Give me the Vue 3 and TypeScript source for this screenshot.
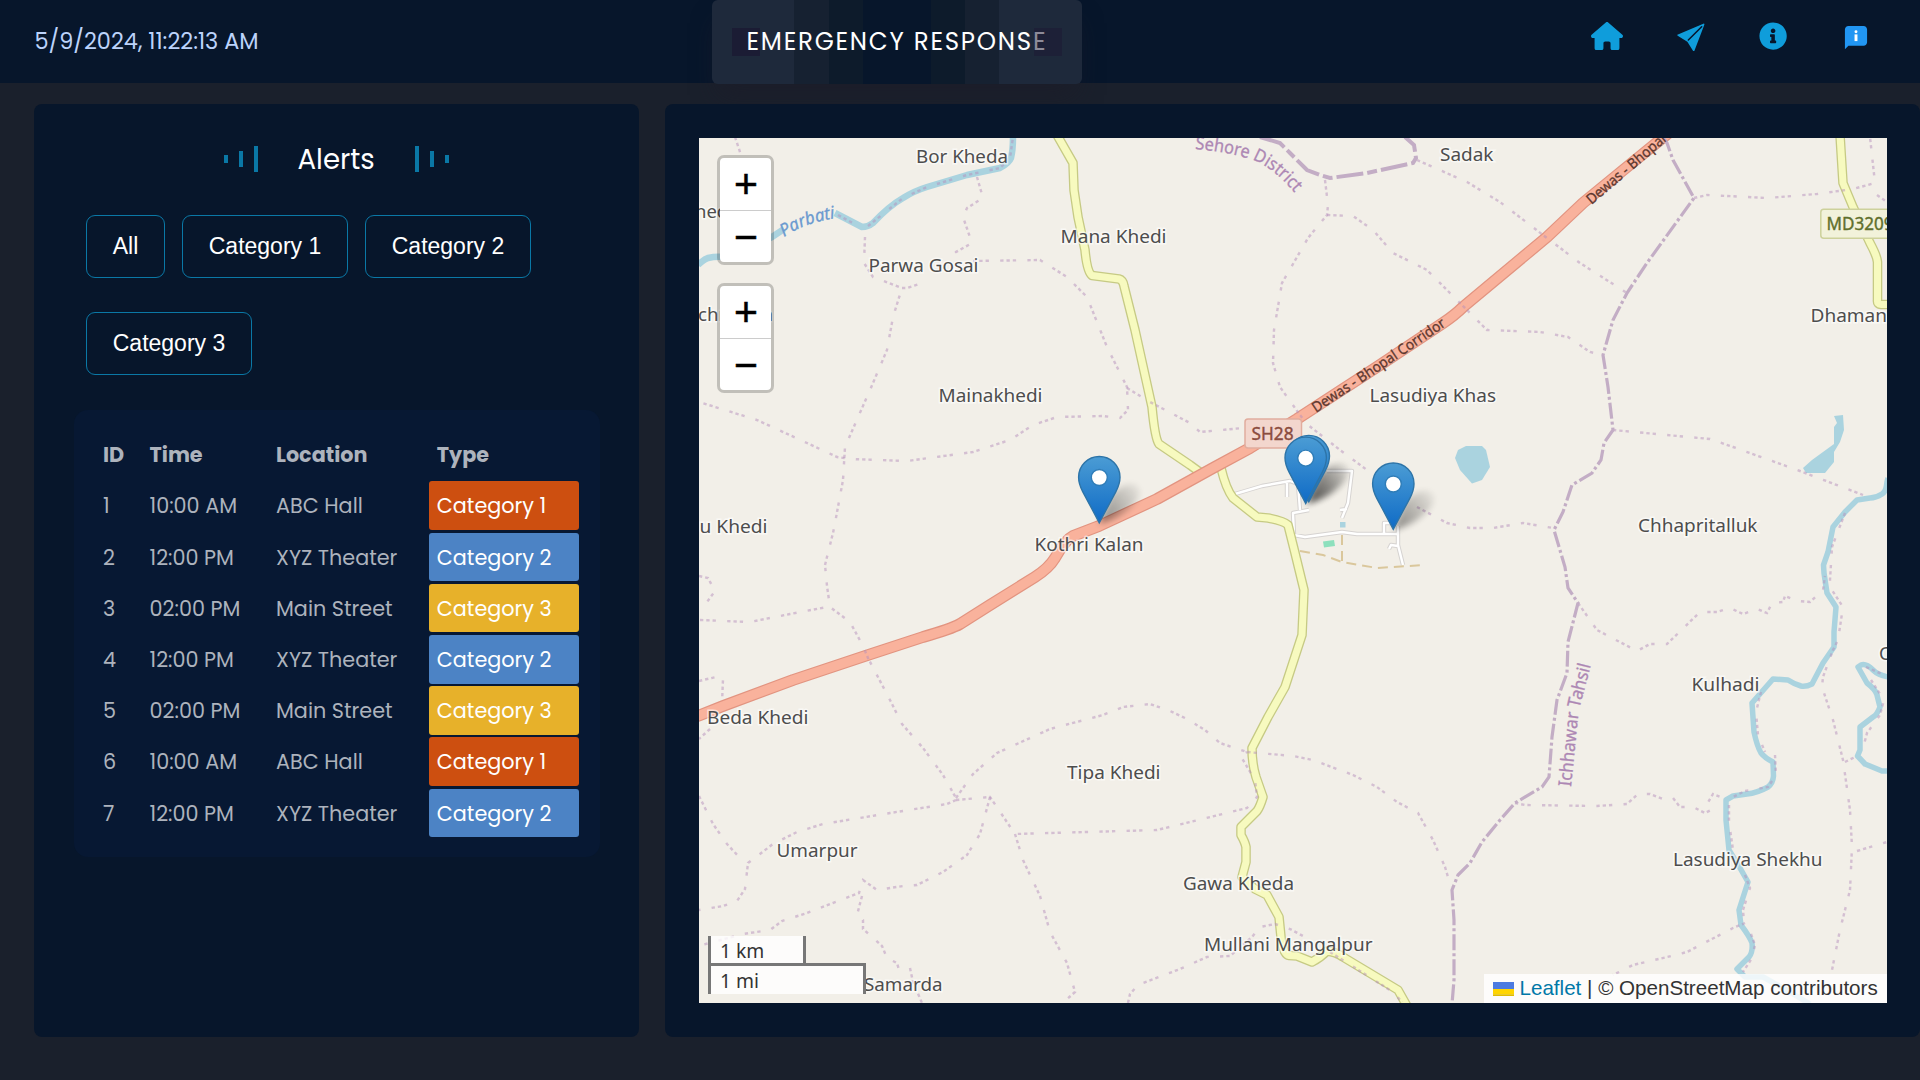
<script setup lang="ts">
type Category = 'Category 1' | 'Category 2' | 'Category 3'

interface AlertRow {
  id: number
  time: string
  location: string
  type: Category
}

interface PlaceLabel {
  name: string
  x: number
  y: number
  w: number
}

const filters: string[] = ['All', 'Category 1', 'Category 2', 'Category 3']

const alerts: AlertRow[] = [
  { id: 1, time: '10:00 AM', location: 'ABC Hall', type: 'Category 1' },
  { id: 2, time: '12:00 PM', location: 'XYZ Theater', type: 'Category 2' },
  { id: 3, time: '02:00 PM', location: 'Main Street', type: 'Category 3' },
  { id: 4, time: '12:00 PM', location: 'XYZ Theater', type: 'Category 2' },
  { id: 5, time: '02:00 PM', location: 'Main Street', type: 'Category 3' },
  { id: 6, time: '10:00 AM', location: 'ABC Hall', type: 'Category 1' },
  { id: 7, time: '12:00 PM', location: 'XYZ Theater', type: 'Category 2' },
]

const badgeClass: Record<Category, string> = {
  'Category 1': 'cat-one',
  'Category 2': 'cat-two',
  'Category 3': 'cat-three',
}

const places: PlaceLabel[] = [
  { name: 'Bor Kheda', x: 916, y: 163.3, w: 92 },
  { name: 'Mana Khedi', x: 1060.5, y: 243, w: 106 },
  { name: 'Parwa Gosai', x: 868.5, y: 272, w: 110 },
  { name: 'Mainakhedi', x: 938.5, y: 401.7, w: 104 },
  { name: 'hedi', x: 695, y: 218, w: 38 },
  { name: 'chnariya', x: 698, y: 321, w: 75 },
  { name: 'u Khedi', x: 699.5, y: 532.5, w: 68 },
  { name: 'Kothri Kalan', x: 1034.5, y: 551.4, w: 109 },
  { name: 'Sadak', x: 1440, y: 161.3, w: 53.5 },
  { name: 'Lasudiya Khas', x: 1369.5, y: 402.4, w: 126.5 },
  { name: 'Beda Khedi', x: 707, y: 723.8, w: 101.5 },
  { name: 'Umarpur', x: 776.5, y: 857, w: 81 },
  { name: 'Tipa Khedi', x: 1067, y: 778.5, w: 93.5 },
  { name: 'Samarda', x: 864, y: 991.2, w: 78.5 },
  { name: 'Gawa Kheda', x: 1183, y: 890.3, w: 111 },
  { name: 'Mullani Mangalpur', x: 1204, y: 951.3, w: 168.5 },
  { name: 'Chhapritalluk', x: 1638, y: 532, w: 119.5 },
  { name: 'Dhaman', x: 1810.5, y: 321.7, w: 76.5 },
  { name: 'Kulhadi', x: 1691.5, y: 691, w: 68 },
  { name: 'Lasudiya Shekhu', x: 1673, y: 866, w: 149.5 },
  { name: 'C', x: 1879, y: 660, w: 11.5 },
]

const villageBoundaries: string[] = [
  '865,237 864,263 873,277 902,288 893,317 887,350 870,390 845,447 843,480 835,523 833,533 825,565 827,586 830,607 850,622 863,646 868,658 890,700 902,724 923,748 943,775 956,798',
  '902,288 907,288 925,282',
  '977,177 983,198 967,208 963,217 972,243 956,252 957,260',
  '973,261 1040,260 1067,277 1087,297 1107,347 1127,387 1128,410 1120,418 1103,416 1057,417 1033,425 1010,440 973,452 907,461 850,459 837,457 807,443 757,420 699,402',
  '1127,388 1150,402 1190,423 1200,432 1243,428',
  '735,137 742,158',
  '1325,180 1328,205 1327,215 1308,238 1282,283 1274,330 1273,363 1280,387 1300,415 1308,425 1340,450 1367,470',
  '1417,507 1447,523 1470,528 1493,528 1523,523 1553,528',
  '1327,215 1353,216 1373,230 1393,253 1427,270 1460,303 1487,330 1540,332 1568,337 1590,352 1603,355',
  '1417,160 1467,182 1500,202 1543,235 1580,263 1627,293',
  '1694,198 1707,195 1767,198 1817,194 1853,189 1875,183 1870,137',
  '1877,195 1887,202',
  '1613,430 1710,439 1733,447 1800,471 1863,495',
  '1578,603 1597,630 1637,651 1650,644 1667,644 1700,612 1717,612 1730,608 1743,614 1757,609 1767,613 1772,603 1783,602 1785,596 1797,601 1810,602 1823,590 1825,576',
  '1845,513 1832,547 1830,580 1830,587 1843,607 1838,640 1833,650 1823,677 1822,687 1833,720 1843,760 1850,810 1852,847 1850,890 1840,930 1832,970',
  '1845,762 1855,757',
  '1857,851 1887,842',
  '1515,803 1525,805 1597,806 1627,804 1638,794 1650,794 1663,799 1673,798 1680,807 1693,807 1705,813 1711,810 1707,804 1713,794 1723,798',
  '1745,923 1733,928 1687,952 1667,957 1633,965 1613,975',
  '956,798 973,774 997,753 1050,729 1103,715 1123,707 1150,704 1170,711 1187,719 1205,730 1220,743 1247,752 1293,756 1313,760 1353,775 1377,787 1397,802 1418,813 1433,840 1445,867 1451,887',
  '956,800 990,797 1015,834 1157,830 1190,822 1247,808 1257,797 1255,780 1240,755 1247,752',
  '1015,834 1023,860 1040,896 1050,932 1067,963 1075,992 1065,1001',
  '990,797 980,834 967,855 943,872 917,885 903,886 877,890 863,880 859,893 807,913 782,921 770,930 743,934 702,945',
  '862,896 857,915 863,920 863,929 882,946 887,958 897,963 899,970',
  '910,968 913,982 922,1003',
  '956,800 947,804 890,813 823,824 797,832 773,844 748,863 745,889 737,901 723,906 699,910',
  '699,796 713,824 727,844 740,858',
  '700,620 750,622 790,614 827,607',
  '699,576 708,578 715,591 707,602',
  '699,681 720,676 723,679 722,703',
  '710,729 699,739',
  '1128,1003 1130,994 1138,985 1180,969 1207,957 1230,956 1252,937 1260,927 1275,924 1290,929 1303,936',
  '1330,952 1393,992 1402,1002',
  '868,226 903,198 927,187 967,175 1000,168 1010,158 1013,137',
  '838,215 860,227',
  '1866,667 1882,674 1887,679',
  '1871,680 1884,700 1880,715 1867,733 1862,752',
  '1761,692 1756,712 1758,735 1765,752',
  '1775,755 1776,775 1768,787 1745,791 1729,799 1729,822 1733,850',
  '1745,875 1750,888 1743,910 1744,922',
  '1751,934 1755,945 1752,958 1743,972',
]

const river =
  'M1888 478 L1887 482 Q1886 492 1882 494 Q1876 498 1870 498 L1857 500 L1845 512 L1833 527 L1828 552 L1823.500 565 L1824 573 L1827 593 L1836 607 L1834 632 L1834 647 L1823 663 L1812 684 Q1806 687 1801 686 Q1794 684 1788 680 L1773 679 L1752 703 L1754 732 Q1757 746 1761 753 Q1765 758 1773 762 L1773.500 776 Q1773 783 1768 787 Q1757 793 1747 794 L1733 796 L1726 800 L1726 820 L1729 850 L1740 868 L1748 882 L1739 910 L1741 925 Q1750 937 1752 943 Q1753 952 1749 957 L1737 969 L1745 977 L1763 977 L1790 992 L1810 1004'

const sideRiver =
  'M1888 677 Q1878 675 1873 670 Q1866 663 1861 665 L1858 667 L1867 683 Q1876 690 1877 695 L1880 707 Q1877 715 1873 717 L1860 727 L1860 750 L1857.500 756 L1865 764 L1882 771 L1888 771'

const parbati =
  'M698 265 Q704 259 708 258 Q716 256 724 257 L745 250 L772 237 L784 229 M835 213 L862 227 Q868 227 873 223 Q889 206 903 198 Q914 191 927 187 L967 175 L1000 168 Q1009 163 1011 158 Q1013 150 1013 137'

const highway =
  'M690 719 L699 715.500 L723 706 L793 680 L868 655 L923 637 Q951 629 960 624 L990 605 L1035 577 Q1049 568 1055 558 Q1065 540 1073 536 L1099 526 L1157 499 L1213 468 L1250 448 L1297 419 L1380 365 L1443 323 Q1455 315 1463 307 L1547 237 L1583 203 L1671 131'

const westRoad =
  'M1057 135 L1073 163 L1074 190 L1078 217 L1085 250 Q1087 272 1092 275.500 L1119 279 Q1123 280 1124 286 L1135 330 L1152 407 Q1155 439 1159 444 L1190 465 L1201 473 M1221 468 Q1226 489 1233 498 L1257 517 L1268 518 Q1284 521 1288 525 L1295 553 L1304 590 L1302 635 L1285 687 L1268 717 L1252 748 Q1252 764 1256 777 L1263 797 Q1260 807 1257 811 L1241 827 L1241 835 Q1245 842 1246 847 L1246 862 L1242 877 L1255 889 L1267 895 L1279 917 L1281 937 Q1283 955 1289 955.500 L1297 956 L1312 962 Q1320 958 1327 951 Q1336 952 1343 957 L1398 990 L1407 1006'

const eastRoad =
  'M1840 135 L1843 183 L1853 207 L1870 243 Q1877 256 1877.500 262 L1877.500 300 Q1877 304.500 1881 304.500 L1890 304.500'

const village =
  'M1235 494 L1262 486 L1290 481 L1298 484 L1300 510 M1287 482 V497 M1309 510 L1293 513 L1294 535 L1305 537 L1342 532 L1357 534 L1398 534 L1398 545 L1403 565 M1398 534 V526 M1384 533 V523 H1393 M1389 549 L1391 545 L1398 546 M1327 471 L1352 471 L1348 503 L1342 518 M1340 510 L1347 509'

const tahsil =
  '1663,137 1667,143 1673,160 1694,198 1647,263 1627,293 1613,320 1603,355 1608,387 1613,430 1604,443 1601,460 1592,473 1572,485 1563,512 1554,530 1565,567 1568,588 1578,603 1568,642 1567,673 1557,700 1552,737 1549,777 1542,787 1515,803 1500,820 1482,842 1470,863 1458,875 1452,890 1454,920 1454,980 1452,1004'

const markers = [
  { x: 1308.8, y: 502.7 },
  { x: 1305.7, y: 504.4 },
  { x: 1099.3, y: 523.8 },
  { x: 1393.3, y: 530.3 },
]
</script>

<template>
  <div class="dashboard">
    <header class="topbar">
      <div class="clock">5/9/2024, 11:22:13 AM</div>
      <div class="title-box">
        <span class="title">EMERGENCY RESPONSE</span>
        <span class="edge edge-left"></span>
        <span class="edge edge-right"></span>
      </div>
      <nav class="nav">
        <a class="nav-item">
          <svg width="32" height="28.400" viewBox="0 0 576 512" fill="#0f9ddb">
            <path d="M575.8 255.500c0 18-15 32.100-32 32.100h-32l.7 160.200c0 2.700-.2 5.400-.5 8.100V472c0 22.100-17.900 40-40 40H456c-1.100 0-2.200 0-3.300-.1c-1.400 .1-2.800 .1-4.200 .1H416 392c-22.100 0-40-17.900-40-40V448 384c0-17.700-14.300-32-32-32H256c-17.700 0-32 14.300-32 32v64 24c0 22.100-17.900 40-40 40H160 128.100c-1.500 0-3-.1-4.500-.2c-1.200 .1-2.400 .2-3.600 .2H104c-22.100 0-40-17.900-40-40V360c0-.9 0-1.900 .1-2.800V287.600H32c-18 0-32-14-32-32.100c0-9 3-17 10-24L266.400 8c7-7 15-8 22-8s15 2 21 7L564.800 231.500c8 7 12 15 11 24z" />
          </svg>
        </a>
        <a class="nav-item">
          <svg class="plane" width="28" height="28.700" viewBox="410 67 84 86">
            <path fill="#0f9ddb" d="M411 102 L489 69 Q493 68 492 72 L462 151 Q460 153 458 150 L441 123 L412 105 Q410 103 411 102Z" />
            <path stroke="#07162b" stroke-width="4.500" stroke-linecap="round" d="M444 118 L484 78" />
          </svg>
        </a>
        <a class="nav-item">
          <svg width="28.200" height="28.200" viewBox="0 0 512 512" fill="#0f9ddb">
            <path d="M256 8C119.043 8 8 119.083 8 256c0 136.997 111.043 248 248 248s248-111.003 248-248C504 119.083 392.957 8 256 8zm0 110c23.196 0 42 18.804 42 42s-18.804 42-42 42-42-18.804-42-42 18.804-42 42-42zm56 254c0 6.627-5.373 12-12 12h-88c-6.627 0-12-5.373-12-12v-24c0-6.627 5.373-12 12-12h12v-64h-12c-6.627 0-12-5.373-12-12v-24c0-6.627 5.373-12 12-12h64c6.627 0 12 5.373 12 12v100h12c6.627 0 12 5.373 12 12v24z" />
          </svg>
        </a>
        <a class="nav-item">
          <svg class="chat" width="28" height="28" viewBox="0 0 48 48">
            <path fill="#2196f3" d="M37 39H11l-6 6V11c0-3.300 2.700-6 6-6h26c3.300 0 6 2.700 6 6v22c0 3.300-2.700 6-6 6z" />
            <rect x="21.500" y="19.500" width="5" height="11.500" fill="#fff" />
            <circle cx="24" cy="15" r="2.500" fill="#fff" />
          </svg>
        </a>
      </nav>
    </header>

    <main class="content">
      <section class="panel alerts">
        <div class="heading">
          <div class="bars">
            <i class="bar small"></i><i class="bar medium"></i><i class="bar large"></i>
          </div>
          <h2>Alerts</h2>
          <div class="bars">
            <i class="bar large"></i><i class="bar medium"></i><i class="bar small"></i>
          </div>
        </div>

        <div class="filters">
          <button v-for="f in filters" :key="f" type="button" :class="{ short: f === 'All' }">{{ f }}</button>
        </div>

        <div class="table-card">
          <div class="row head">
            <span>ID</span><span>Time</span><span>Location</span><span class="type">Type</span>
          </div>
          <div v-for="a in alerts" :key="a.id" class="row">
            <span>{{ a.id }}</span>
            <span>{{ a.time }}</span>
            <span>{{ a.location }}</span>
            <span class="type" :class="badgeClass[a.type]">{{ a.type }}</span>
          </div>
        </div>
      </section>

      <section class="panel map-panel">
        <div class="map">
          <svg class="tiles" width="1188" height="865" viewBox="699 138 1188 865">
            <defs>
              <linearGradient id="pin" x1="0" y1="0" x2="0" y2="1">
                <stop offset="0" stop-color="#4b9cd4" />
                <stop offset="1" stop-color="#0f6bc6" />
              </linearGradient>
              <linearGradient id="shade" gradientUnits="userSpaceOnUse" x1="0" y1="0" x2="42" y2="-34">
                <stop offset="0" stop-color="#000" stop-opacity=".75" />
                <stop offset="1" stop-color="#000" stop-opacity=".08" />
              </linearGradient>
              <filter id="soft" x="-50%" y="-50%" width="200%" height="200%">
                <feGaussianBlur stdDeviation="3" />
              </filter>
              <path id="sehore" d="M1195 149 Q1228 152 1252 159.500 Q1275 168 1298 197" />
              <path id="parbatiText" d="M784 237 Q806 222 838 218" />
              <path id="tahsilText" d="M1571 787 L1576 738 Q1578 708 1584 692 L1592 660" />
              <path id="corridorA" d="M1316 413 L1380 370.500 L1452 322" />
              <path id="corridorB" d="M1591.500 205 L1680 129.500 L1730 88" />
            </defs>

            <rect x="699" y="138" width="1188" height="865" fill="#f2efe8" />

            <g fill="#aad3df">
              <polygon points="1466,446 1482,446 1486,450 1490,467 1482,480 1472,483.500 1460,470 1455,458 1458,450" />
              <polygon points="1834,416 1843,415 1844,430 1840,442 1834,452 1834,462 1825,473 1806,473 1803,468 1812,460 1834,444 1834,427 1837,423" />
              <rect x="1340" y="522" width="5.500" height="5.500" />
            </g>
            <polygon fill="#8de0bd" points="1323,541.500 1334,540 1335,546 1324,547.500" />

            <g fill="none" stroke="#aad3df" stroke-width="5.500" stroke-linejoin="round">
              <path :d="river" />
              <path :d="sideRiver" />
              <path :d="parbati" stroke-width="6.500" />
            </g>

            <g fill="none" stroke-linejoin="round">
              <path :d="village" stroke="#d6d3d1" stroke-width="4.400" />
              <path :d="village" stroke="#fff" stroke-width="2.400" />
              <path d="M1300 551 L1323 555 L1342 562 L1377 568 L1425 565 M1342 535 V562" stroke="#dac79c" stroke-width="2" stroke-dasharray="10 6" />
              <path :d="westRoad" stroke="#c6ca84" stroke-width="9.600" />
              <path :d="westRoad" stroke="#f7fabf" stroke-width="7" />
              <path :d="eastRoad" stroke="#c6ca84" stroke-width="9.600" />
              <path :d="eastRoad" stroke="#f7fabf" stroke-width="7" />
              <path :d="highway" stroke="#e29480" stroke-width="11.800" />
              <path :d="highway" stroke="#f9b29c" stroke-width="9.400" />
            </g>

            <g fill="none" stroke="#b590bb" stroke-opacity=".5" stroke-width="2.400" stroke-dasharray="3.300 3 3.300 3 3.300 11.300">
              <polyline v-for="(p, i) in villageBoundaries" :key="i" :points="p" />
            </g>
            <polyline fill="none" stroke="#c3adc5" stroke-width="3.200" stroke-dasharray="16 3 3 3" :points="tahsil" />
            <polyline fill="none" stroke="#c3adc5" stroke-width="4" stroke-dasharray="27 4 10 4" points="1260,137 1280,143 1290,153 1307,170 1320,175 1330,178 1367,173 1413,163 1416,158 1414,145 1405,137" />

            <g class="places">
              <text v-for="p in places" :key="p.name" :x="p.x" :y="p.y" :textLength="p.w" lengthAdjust="spacingAndGlyphs">{{ p.name }}</text>
            </g>

            <text class="admin"><textPath href="#sehore" textLength="113" lengthAdjust="spacingAndGlyphs">Sehore District</textPath></text>
            <text class="admin"><textPath href="#tahsilText" textLength="124" lengthAdjust="spacingAndGlyphs">Ichhawar Tahsil</textPath></text>
            <text class="water"><textPath href="#parbatiText" textLength="55" lengthAdjust="spacingAndGlyphs">Parbati</textPath></text>
            <text class="road"><textPath href="#corridorA" textLength="157" lengthAdjust="spacingAndGlyphs">Dewas - Bhopal Corridor</textPath></text>
            <text class="road"><textPath href="#corridorB" textLength="157" lengthAdjust="spacingAndGlyphs">Dewas - Bhopal Corridor</textPath></text>

            <rect x="1245" y="419" width="56.500" height="29" rx="3" fill="#f3d6cd" stroke="#e1ad9e" stroke-width="1.500" />
            <text class="shield" fill="#8b4c3e" stroke="#8b4c3e" x="1251.500" y="440" textLength="42" lengthAdjust="spacingAndGlyphs">SH28</text>
            <rect x="1820.800" y="209.300" width="80" height="29" rx="3" fill="#f2f2da" stroke="#cdd19b" stroke-width="1.500" />
            <text class="shield" fill="#5f6f2c" stroke="#5f6f2c" x="1826.500" y="230" textLength="67" lengthAdjust="spacingAndGlyphs">MD3209</text>

            <g v-for="(m, i) in markers" :key="'s' + i" :transform="`translate(${m.x} ${m.y})`">
              <path d="M0 0 L11 -28 Q24 -42 36 -39 Q46 -32 34 -19 Q22 -6 0 0Z" fill="url(#shade)" filter="url(#soft)" opacity=".6" />
            </g>
            <g v-for="(m, i) in markers" :key="'m' + i" :transform="`translate(${m.x} ${m.y})`">
              <path d="M0 -1 L-16.500 -32 Q-20.700 -40 -20.700 -46.600 A20.700 20.700 0 0 1 20.700 -46.600 Q20.700 -40 16.500 -32 Z" fill="url(#pin)" stroke="#2d74a8" stroke-width="1.400" />
              <circle cx="0" cy="-46.300" r="8" fill="#fff" stroke="#2f7db8" stroke-width="1.400" />
            </g>
          </svg>

          <div class="controls">
            <div class="zoom-group"><a>+</a><a>−</a></div>
            <div class="zoom-group"><a>+</a><a>−</a></div>
          </div>
          <div class="scale">
            <div class="scale-line km">1 km</div>
            <div class="scale-line mi">1 mi</div>
          </div>
          <div class="attribution">
            <svg width="21" height="14" viewBox="0 0 12 8">
              <path fill="#4c7be1" d="M0 0h12v4H0z" />
              <path fill="#ffd500" d="M0 4h12v3H0z" />
              <path fill="#e0bc00" d="M0 7h12v1H0z" />
            </svg>
            <span class="credit"><a>Leaflet</a> | © OpenStreetMap contributors</span>
          </div>
        </div>
      </section>
    </main>
  </div>
</template>

<style>
body {
  margin: 0;
  background: #1a202c;
}
</style>

<style scoped>
.dashboard {
  width: 1920px;
  height: 1080px;
  overflow: hidden;
  background: #1a202c;
  font-family: Poppins, Inter, sans-serif;
  color: #fff;
}

.topbar {
  display: grid;
  grid-template-columns: 712px 370px 1fr;
  height: 83px;
  background: #07162b;
}

.clock {
  padding-left: 34.500px;
  font-size: 22.400px;
  line-height: 83px;
  color: #bcd3fb;
  white-space: nowrap;
}

.title-box {
  position: relative;
  display: flex;
  align-items: center;
  padding-left: 34.500px;
  border-radius: 6px;
  background: linear-gradient(
    90deg,
    #1e293b 0 82.500px,
    #162131 82.500px 117px,
    #0d1b2b 117px 151px,
    #07162b 151px 219px,
    #0d1b2b 219px 253px,
    #162131 253px 287.500px,
    #1e293b 287.500px
  );
  box-shadow: 0 17px 26px -6px rgba(30, 27, 40, 0.55);
}

.title {
  position: relative;
  z-index: 1;
  font-size: 24.500px;
  line-height: 84px;
  letter-spacing: 1.750px;
  white-space: nowrap;
}

.edge {
  position: absolute;
  top: 28px;
  width: 28px;
  height: 28px;
}

.edge-left {
  left: 20px;
  z-index: 0;
  background: #1b1c34;
}

.edge-right {
  right: 20px;
  z-index: 2;
  background: rgba(27, 24, 52, 0.5);
}

.nav {
  display: flex;
  justify-content: flex-end;
  padding-right: 22.500px;
}

.nav-item {
  display: flex;
  justify-content: center;
  align-items: flex-start;
  width: 83px;
  padding-top: 21.500px;
}

.nav-item .plane {
  margin-top: 1px;
  margin-left: 2px;
}

.nav-item .chat {
  margin-top: 1.500px;
}

.content {
  display: flex;
  gap: 26px;
  padding: 21px 0 0 34px;
}

.panel {
  position: relative;
  box-sizing: border-box;
  height: 933px;
  border-radius: 8px;
  background: #07162b;
}

.alerts {
  width: 605px;
  padding: 31px 40px 0 40px;
}

.heading {
  display: flex;
  justify-content: center;
  align-items: center;
  gap: 40px;
  height: 48px;
  margin-left: -1px;
}

.heading h2 {
  width: 77px;
  margin: 0;
  font-size: 27.600px;
  font-weight: 400;
  line-height: 49px;
  text-align: center;
  white-space: nowrap;
}

.bars {
  display: flex;
  align-items: center;
  gap: 11px;
}

.bar {
  width: 4px;
  background: #0a78a6;
}

.bar.small {
  height: 8px;
}

.bar.medium {
  height: 16px;
}

.bar.large {
  height: 26px;
}

.filters {
  display: flex;
  flex-wrap: wrap;
  gap: 34px 17px;
  padding: 32px 12px 35px;
}

.filters button {
  box-sizing: border-box;
  width: 166px;
  height: 63px;
  padding: 0;
  border: 1px solid #0a78a6;
  border-radius: 9px;
  background: transparent;
  color: #fff;
  font-family: "Liberation Sans", Arial, sans-serif;
  font-size: 23px;
}

.filters button.short {
  width: 79px;
}

.table-card {
  box-sizing: border-box;
  width: 526px;
  height: 447px;
  padding: 20.300px 21px 18px 22px;
  border-radius: 14px;
  background: #071833;
  color: #adb3bd;
  font-size: 20.750px;
}

.row {
  display: grid;
  grid-template-columns: 46.500px 126.500px 160px 150px;
  padding-bottom: 2.700px;
}

.row span {
  box-sizing: border-box;
  height: 48.500px;
  padding-left: 7px;
  line-height: 49px;
  white-space: nowrap;
}

.row.head {
  font-weight: 700;
}

.row .type {
  padding-left: 7.800px;
  border-radius: 3px;
}

.row:not(.head) .type {
  color: #fff;
}

.cat-one {
  background: #cd4f10;
}

.cat-two {
  background: #4c83c5;
}

.cat-three {
  background: #e7b12a;
}

.map-panel {
  width: 1255px;
  padding: 34px;
}

.map {
  position: relative;
  width: 1188px;
  height: 865px;
  overflow: hidden;
  background: #f2efe8;
}

.tiles {
  display: block;
}

.places text {
  font-family: "Noto Sans", sans-serif;
  font-size: 18px;
  fill: #4d4d4d;
  stroke: rgba(255, 255, 255, 0.6);
  stroke-width: 3px;
  paint-order: stroke;
}

.admin {
  font-family: "Noto Sans", sans-serif;
  font-size: 18px;
  fill: #ad87b4;
  stroke: #ad87b4;
  stroke-width: 0.3px;
}

.water {
  font-family: "Noto Sans", sans-serif;
  font-size: 17.500px;
  font-style: italic;
  fill: #6b9ad0;
  stroke: #6b9ad0;
  stroke-width: 0.3px;
}

.road {
  font-family: "Noto Sans", sans-serif;
  font-size: 14.500px;
  fill: #5e382f;
  stroke: #5e382f;
  stroke-width: 0.3px;
}

.shield {
  font-family: "Noto Sans", sans-serif;
  font-size: 18px;
  stroke-width: 0.4px;
}

.controls {
  position: absolute;
  top: 17px;
  left: 18px;
  display: flex;
  flex-direction: column;
  gap: 18px;
}

.zoom-group {
  width: 51px;
  border: 3px solid rgba(0, 0, 0, 0.2);
  border-radius: 7px;
  background: #fff;
  background-clip: padding-box;
}

.zoom-group a {
  display: block;
  height: 51px;
  text-align: center;
  text-indent: 1px;
  color: #000;
  font: 41px/52px "Liberation Sans", sans-serif;
  -webkit-text-stroke: 0.5px #000;
}

.zoom-group a:first-child {
  height: 52px;
  border-bottom: 1px solid #ccc;
}

.scale {
  position: absolute;
  left: 9px;
  bottom: 9px;
  color: #333;
  font: 19.250px/30px "Noto Sans", sans-serif;
}

.scale-line {
  box-sizing: border-box;
  height: 30px;
  padding-left: 9px;
  border: 3px solid #777;
  border-top: none;
  background: rgba(255, 255, 255, 0.8);
}

.km {
  width: 98px;
}

.mi {
  width: 158px;
  height: 31px;
  margin-top: -3px;
  border-top: 3px solid #777;
  border-bottom: none;
}

.attribution {
  position: absolute;
  right: 0;
  bottom: 0;
  display: flex;
  align-items: center;
  gap: 5.500px;
  box-sizing: border-box;
  width: 403px;
  height: 29px;
  padding-left: 9px;
  background: rgba(255, 255, 255, 0.8);
  color: #333;
  font: 20.600px/27px "Liberation Sans", Arial, sans-serif;
  white-space: nowrap;
}

.credit {
  margin-bottom: 2px;
}

.attribution a {
  color: #0078a8;
}
</style>
